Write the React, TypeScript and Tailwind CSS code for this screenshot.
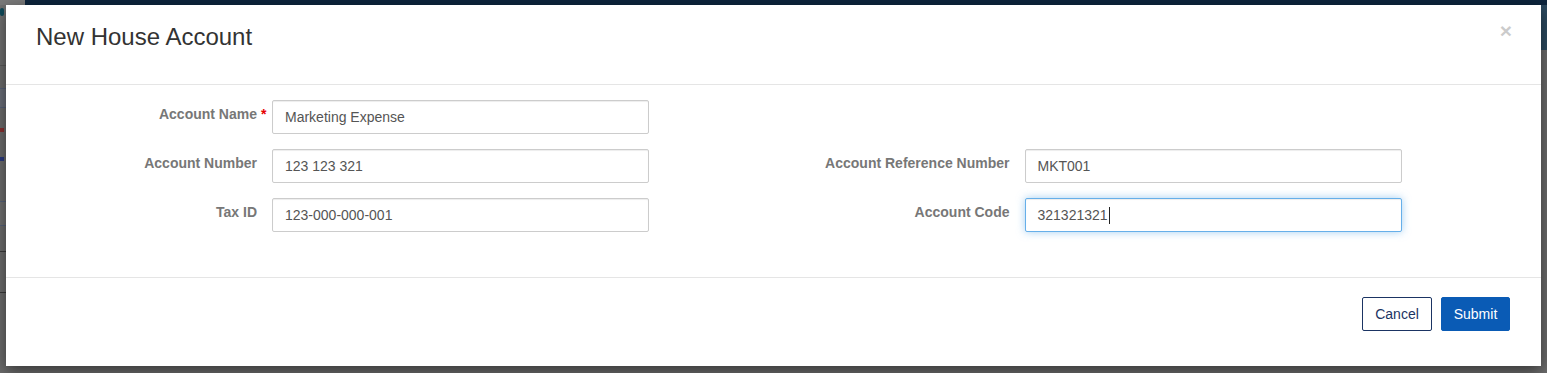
import React from "react";

type Field = {
  label: string;
  value: string;
  required?: boolean;
  focused?: boolean;
} | null;

const fields: Field[] = [
  { label: "Account Name", value: "Marketing Expense", required: true },
  null,
  { label: "Account Number", value: "123 123 321" },
  { label: "Account Reference Number", value: "MKT001" },
  { label: "Tax ID", value: "123-000-000-001" },
  { label: "Account Code", value: "321321321", focused: true },
];

const FormRow = ({ field }: { field: Field }) => {
  if (!field) return <div />;
  return (
    <div className="flex items-start">
      <label className="w-[236px] shrink-0 pt-[4px] text-right text-[14px] leading-5 font-bold text-[#777]">
        <span className="relative">
          {field.label}
          {field.required && <span className="absolute left-full top-[-2px] ml-[4px] text-[#e60000]">*</span>}
        </span>
      </label>
      {field.focused ? (
        <div className="ml-[15px] flex h-[34px] w-[377px] items-center rounded-[2px] border border-[#66afe9] bg-white px-[12px] text-[14px] text-[#555] shadow-[inset_0_1px_1px_rgba(0,0,0,0.075),0_0_8px_rgba(102,175,233,0.6)]">
          {field.value}
          <span className="ml-[1px] inline-block h-[17px] w-px bg-[#222]" />
        </div>
      ) : (
        <input
          readOnly
          value={field.value}
          className="ml-[15px] h-[34px] w-[377px] rounded-[2px] border border-[#ccc] bg-white px-[12px] text-[14px] text-[#555] outline-none shadow-[inset_0_1px_1px_rgba(0,0,0,0.075)]"
        />
      )}
    </div>
  );
};

const Backdrop = () => (
  <div className="absolute inset-0 bg-[#6c6c6c]">
    <div className="flex h-[5px]">
      <div className="w-[25px] bg-[#7a7a7a]" />
      <div className="flex-1 bg-[#0d253d]" />
    </div>
    <div className="flex h-[45px]">
      <div className="w-[6px] bg-[#717171]">
        <div className="mt-[3px] h-[8px] w-[4px] rounded-full bg-[#0e4a5a]" />
      </div>
      <div className="flex-1" />
      <div className="w-[6px] bg-[#2c4a60]" />
    </div>
    <div className="mt-[15px] h-[1px] w-[6px] bg-[#5a5a5a]" />
    <div className="mt-[22px] h-[20px] w-[6px] border-y border-[#56627a] bg-[#6a6e78]" />
    <div className="mt-[20px] h-[4px] w-[4px] bg-[#8a3030]" />
    <div className="mt-[25px] h-[4px] w-[4px] bg-[#2a3a80]" />
    <div className="mt-[40px] h-[25px] w-[6px] border-y border-[#56627a] bg-[#707070]" />
    <div className="mt-[25px] h-[1px] w-[6px] bg-[#3a3a3a]" />
    <div className="mt-[40px] h-[1px] w-[6px] bg-[#3a3a3a]" />
  </div>
);

export default function App() {
  return (
    <div className="relative h-[373px] w-full overflow-hidden font-['Liberation_Sans',Arial,sans-serif]">
      <Backdrop />
      <div className="absolute left-[6px] top-[5px] w-[1535px] bg-white shadow-[0_5px_15px_rgba(0,0,0,0.5)]">
        <div className="flex h-[80px] items-start justify-between border-b border-[#e5e5e5] pl-[30px] pr-[29px] pt-[19px]">
          <h4 className="text-[24px] leading-[1.1] text-[#333]">New House Account</h4>
          <button className="mt-[-4px] text-[21px] font-bold leading-none text-black opacity-20">×</button>
        </div>
        <div className="grid grid-cols-2 gap-y-[15px] px-[15px] pb-[45px] pt-[15px]">
          {fields.map((f, i) => (
            <FormRow key={i} field={f} />
          ))}
        </div>
        <div className="flex h-[89px] items-start justify-end gap-[9px] border-t border-[#e5e5e5] pr-[31px] pt-[19px]">
          <button className="h-[34px] w-[70px] rounded-[2px] border border-[#1b3463] bg-white text-[14px] text-[#1b3463]">
            Cancel
          </button>
          <button className="h-[34px] w-[69px] rounded-[2px] border border-[#0a5bb5] bg-[#0a5bb5] text-[14px] text-white">
            Submit
          </button>
        </div>
      </div>
    </div>
  );
}
